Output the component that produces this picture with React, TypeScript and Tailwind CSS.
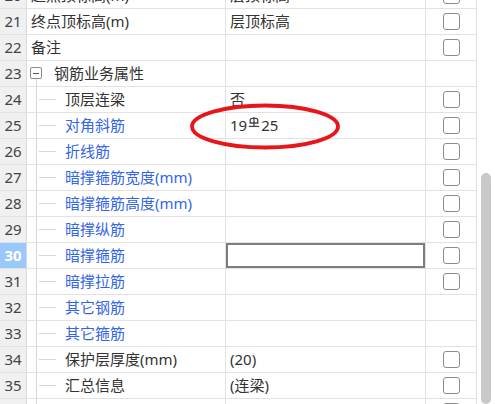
import type { ReactNode } from 'react';

type Row = {
  no: number;
  name: string;
  value?: ReactNode;
  blue?: boolean;
  level: 0 | 1 | 'group';
  check: boolean;
  selected?: boolean;
};

function RebarMark() {
  // HRB400 grade mark (drawn by a custom font in the original app)
  return (
    <svg width="12" height="11" viewBox="0 0 12 11" className="inline-block mx-[1px] -translate-y-[3px]" fill="none" stroke="#444" strokeWidth="1.3">
      <path d="M2.2 6V3.4Q2.2 1.4 4.2 1.4H7.8Q9.8 1.4 9.8 3.4V6Z" />
      <path d="M6 0.2V9.4" />
      <path d="M0.8 9.4H11.2" />
    </svg>
  );
}

const rows: Row[] = [
  { no: 20, name: '起点顶标高(m)', value: '层顶标高', level: 0, check: true },
  { no: 21, name: '终点顶标高(m)', value: '层顶标高', level: 0, check: true },
  { no: 22, name: '备注', level: 0, check: true },
  { no: 23, name: '钢筋业务属性', level: 'group', check: false },
  { no: 24, name: '顶层连梁', value: '否', level: 1, check: true },
  {
    no: 25,
    name: '对角斜筋',
    value: (
      <>
        19
        <RebarMark />
        25
      </>
    ),
    blue: true,
    level: 1,
    check: true,
  },
  { no: 26, name: '折线筋', blue: true, level: 1, check: true },
  { no: 27, name: '暗撑箍筋宽度(mm)', blue: true, level: 1, check: true },
  { no: 28, name: '暗撑箍筋高度(mm)', blue: true, level: 1, check: true },
  { no: 29, name: '暗撑纵筋', blue: true, level: 1, check: true },
  { no: 30, name: '暗撑箍筋', blue: true, level: 1, check: true, selected: true },
  { no: 31, name: '暗撑拉筋', blue: true, level: 1, check: true },
  { no: 32, name: '其它钢筋', blue: true, level: 1, check: false },
  { no: 33, name: '其它箍筋', blue: true, level: 1, check: false },
  { no: 34, name: '保护层厚度(mm)', value: '(20)', level: 1, check: true },
  { no: 35, name: '汇总信息', value: '(连梁)', level: 1, check: true },
  { no: 36, name: '', level: 1, check: true },
];

function NameCell({ row }: { row: Row }) {
  const color = row.blue ? 'text-[#3366e6]' : 'text-[#333333]';

  if (row.level === 0) {
    return <div className={`flex items-center pl-[4px] ${color}`}>{row.name}</div>;
  }

  if (row.level === 'group') {
    return (
      <div className="flex items-stretch pl-[3px]">
        <div className="flex flex-col w-[12px]">
          <div className="h-[6px]" />
          <div className="w-[12px] h-[12px] border border-[#8c8c8c] rounded-[2px] flex items-center justify-center bg-white">
            <div className="w-[6px] h-px bg-[#555]" />
          </div>
          <div className="flex-1 ml-[6px] border-l border-[#d6d6d6]" />
        </div>
        <div className={`flex items-center ml-[12px] ${color}`}>{row.name}</div>
      </div>
    );
  }

  return (
    <div className="flex items-stretch pl-[9px]">
      <div className="w-[20px] border-l border-[#d6d6d6] flex items-center">
        <div className="w-full h-px bg-[#d6d6d6] ml-[2px]" />
      </div>
      <div className={`flex items-center ml-[9px] ${color}`}>{row.name}</div>
    </div>
  );
}

export default function App() {
  return (
    <div
      className="relative w-[495px] h-[404px] overflow-hidden bg-white text-[15px] leading-none"
      style={{ fontFamily: '"Noto Sans", "Noto Sans CJK SC", sans-serif' }}
    >
      <div className="flex h-full">
        {/* Grid */}
        <div className="flex flex-col w-[477px] -mt-[17px] border-r border-[#e0e0e0]">
          {rows.map((row) => (
            <div key={row.no} className="flex h-[26px] shrink-0 border-b border-[#e2e2e2]">
              <div
                className={`w-[27px] shrink-0 flex items-center justify-center border-r border-[#d9d9d9] ${
                  row.selected ? 'bg-[#99c8fb] text-white font-bold' : 'bg-[#f0f0f0] text-[#444]'
                }`}
              >
                {row.no}
              </div>
              <div className="w-[199px] shrink-0 border-r border-[#e2e2e2] flex">
                <NameCell row={row} />
              </div>
              <div
                className={`w-[200px] shrink-0 border-r border-[#e2e2e2] flex items-center pl-[4px] text-[#333] ${
                  row.selected ? 'shadow-[inset_0_0_0_2px_#7d7d7d]' : ''
                }`}
              >
                {row.value}
              </div>
              <div className="flex-1 flex items-center justify-center">
                {row.check && <div className="w-[17px] h-[17px] border border-[#8c8c8c] rounded-[3px] bg-white" />}
              </div>
            </div>
          ))}
        </div>

        {/* Scrollbar */}
        <div className="flex-1 flex flex-col items-center bg-white">
          <div className="mt-[173px] w-[10px] h-[260px] rounded-full bg-[#c9c9c9]" />
        </div>
      </div>

      {/* Red annotation ellipse */}
      <svg className="absolute left-[188px] top-[102px]" width="154" height="50" viewBox="0 0 154 50" fill="none">
        <ellipse cx="77" cy="24.5" rx="73" ry="21" stroke="#e8161b" strokeWidth="3.8" />
      </svg>
    </div>
  );
}
